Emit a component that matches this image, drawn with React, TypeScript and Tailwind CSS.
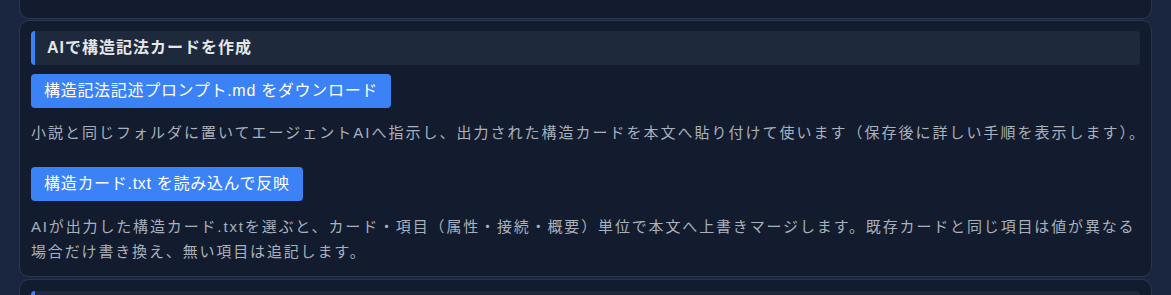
import React from "react";

const font = {
  fontFamily: '"Liberation Sans", "Noto Sans CJK JP", sans-serif',
};

export default function App() {
  return (
    <div
      className="h-[295px] w-[1171px] overflow-hidden bg-[#1a2540] px-[19px]"
      style={font}
    >
      {/* previous card (bottom part) */}
      <div className="h-[19px] rounded-b-[10px] border border-t-0 border-[#2a3650] bg-[#131c2e]" />
      {/* main card */}
      <div className="mt-[1px] rounded-[10px] border border-[#2a3650] bg-[#131c2e] px-[11px] pt-[10px] pb-[12px]">
        <div className="flex h-[34px] items-center rounded-[4px] border-l-4 border-[#3b82f6] bg-[#1e293b] pl-3">
          <span className="text-[16px] font-bold tracking-[1px] text-[#e5e7eb]">
            AIで構造記法カードを作成
          </span>
        </div>
        <button className="mt-[9px] flex h-[34px] items-center rounded-[4px] bg-[#3b82f6] px-[13px] text-[16px] tracking-[0.7px] text-white">
          構造記法記述プロンプト.md をダウンロード
        </button>
        <p className="mt-[12px] whitespace-nowrap text-[15px] leading-[25px] tracking-[2px] text-[#a9b1bd]">
          小説と同じフォルダに置いてエージェントAIへ指示し、出力された構造カードを本文へ貼り付けて使います（保存後に詳しい手順を表示します）。
        </p>
        <button className="mt-[22px] flex h-[34px] items-center rounded-[4px] bg-[#3b82f6] px-[13px] text-[16px] tracking-[0.7px] text-white">
          構造カード.txt を読み込んで反映
        </button>
        <p className="mt-[13px] text-[15px] leading-[25px] tracking-[1.85px] text-[#a9b1bd]">
          AIが出力した構造カード.txtを選ぶと、カード・項目（属性・接続・概要）単位で本文へ上書きマージします。既存カードと同じ項目は値が異なる場合だけ書き換え、無い項目は追記します。
        </p>
      </div>
      {/* next card (top part) */}
      <div className="mt-[2px] rounded-t-[10px] border border-b-0 border-[#2a3650] bg-[#131c2e] px-[11px] pt-[11px]">
        <div className="h-[34px] rounded-[4px] border-l-4 border-[#3b82f6] bg-[#1e293b]" />
      </div>
    </div>
  );
}
